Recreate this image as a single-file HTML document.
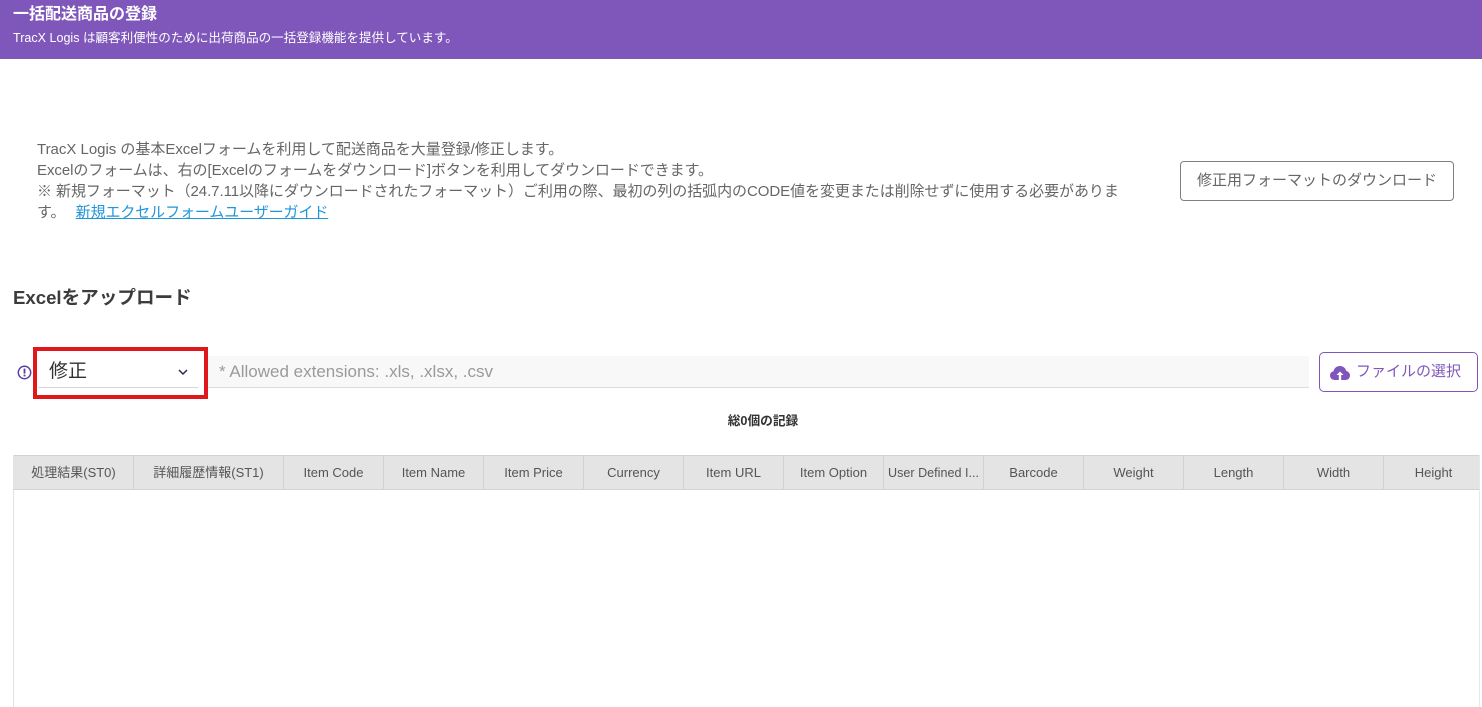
<!DOCTYPE html>
<html lang="ja">
<head>
<meta charset="utf-8">
<style>
html,body{margin:0;padding:0;background:#fff;}
body{width:1482px;height:707px;overflow:hidden;position:relative;font-family:"Liberation Sans","Noto Sans CJK JP",sans-serif;color:#666;}
.a{position:absolute;white-space:nowrap;}
.hd{left:0;top:0;width:1482px;height:59px;background:#7f57bb;}
.c{position:absolute;top:456px;height:33px;line-height:33px;text-align:center;font-size:13px;color:#555;border-right:1px solid #d2d2d2;box-sizing:border-box;overflow:hidden;}
</style>
</head>
<body>
<div class="a hd"></div>
<div class="a" style="left:13px;top:5px;font-size:16px;line-height:20px;font-weight:bold;color:#fff;">一括配送商品の登録</div>
<div class="a" style="left:13px;top:29px;font-size:12.55px;line-height:18px;color:#fff;">TracX Logis は顧客利便性のために出荷商品の一括登録機能を提供しています。</div>

<div class="a" style="left:37px;top:139px;font-size:15px;line-height:21px;color:#666;"><span style="letter-spacing:-.02px;">TracX Logis の基本Excelフォームを利用して配送商品を大量登録/修正します。</span><br><span style="letter-spacing:-.055px;">Excelのフォームは、右の[Excelのフォームをダウンロード]ボタンを利用してダウンロードできます。</span><br><span style="letter-spacing:-.06px;">※ 新規フォーマット（24.7.11以降にダウンロードされたフォーマット）ご利用の際、最初の列の括弧内のCODE値を変更または削除せずに使用する必要がありま</span><br>す。 <span style="color:#2196d9;text-decoration:underline;margin-left:6px;letter-spacing:-.1px;">新規エクセルフォームユーザーガイド</span></div>

<div class="a" style="left:1180px;top:161px;width:274px;height:40px;box-sizing:border-box;border:1px solid #808080;border-radius:4px;text-align:center;line-height:38px;font-size:15px;color:#666;">修正用フォーマットのダウンロード</div>

<div class="a" style="left:13px;top:286px;font-size:18.6px;line-height:24px;font-weight:bold;color:#3c3c3c;">Excelをアップロード</div>

<svg class="a" style="left:17px;top:365px;" width="15" height="15" viewBox="0 0 15 15"><circle cx="7.5" cy="7.5" r="6.2" fill="none" stroke="#5b3fa0" stroke-width="1.5"/><rect x="6.6" y="3.6" width="1.8" height="5" fill="#5b3fa0"/><rect x="6.6" y="9.6" width="1.8" height="1.8" fill="#5b3fa0"/></svg>

<div class="a" style="left:33px;top:347px;width:175px;height:52px;box-sizing:border-box;border:4px solid #e0181c;"></div>
<div class="a" style="left:38px;top:387px;width:160px;height:1px;background:#d6d6d6;"></div>
<div class="a" style="left:49px;top:359px;font-size:19px;line-height:26px;color:#333;">修正</div>
<svg class="a" style="left:177px;top:367px;" width="12" height="10" viewBox="0 0 12 10"><path d="M2 3 L6 7 L10 3" fill="none" stroke="#2a2a55" stroke-width="1.5"/></svg>

<div class="a" style="left:208px;top:356px;width:1101px;height:32px;background:#f8f8f8;border-bottom:1px solid #dcdcdc;box-sizing:border-box;"></div>
<div class="a" style="left:219px;top:361px;font-size:17px;line-height:22px;color:#9a9a9a;">* Allowed extensions: .xls, .xlsx, .csv</div>

<div class="a" style="left:1319px;top:352px;width:159px;height:40px;box-sizing:border-box;border:1px solid #7f57bb;border-radius:5px;"></div>
<svg class="a" style="left:1330px;top:365px;" width="20" height="16" viewBox="0 0 20 16"><path d="M5 15 C2 15 0 13 0 10.5 C0 8.300 1.500 6.700 3.500 6.300 C4.200 3 6.800 1 10 1 C13.200 1 15.600 3.200 16.200 6 C18.300 6.300 20 8.200 20 10.500 C20 13 18 15 15.500 15 Z" fill="#7f57bb"/><path d="M10 6.500 L13.500 10 L11.200 10 L11.200 15 L8.800 15 L8.800 10 L6.500 10 Z" fill="#fff"/></svg>
<div class="a" style="left:1356px;top:362px;font-size:15px;line-height:20px;color:#7f57bb;">ファイルの選択</div>

<div class="a" style="left:0;top:412px;width:1526px;text-align:center;font-size:12.7px;line-height:18px;font-weight:bold;color:#333;">総0個の記録</div>

<div class="a" style="left:13px;top:455px;width:1466px;height:35px;background:#e4e4e4;border-top:1px solid #d2d2d2;border-bottom:1px solid #d2d2d2;box-sizing:border-box;"></div>
<div class="c" style="left:14px;width:120px;">処理結果(ST0)</div>
<div class="c" style="left:134px;width:150px;">詳細履歴情報(ST1)</div>
<div class="c" style="left:284px;width:100px;">Item Code</div>
<div class="c" style="left:384px;width:100px;">Item Name</div>
<div class="c" style="left:484px;width:100px;">Item Price</div>
<div class="c" style="left:584px;width:100px;">Currency</div>
<div class="c" style="left:684px;width:100px;">Item URL</div>
<div class="c" style="left:784px;width:100px;">Item Option</div>
<div class="c" style="left:884px;width:100px;font-size:12.6px;line-height:34px;">User Defined I...</div>
<div class="c" style="left:984px;width:100px;">Barcode</div>
<div class="c" style="left:1084px;width:100px;">Weight</div>
<div class="c" style="left:1184px;width:100px;">Length</div>
<div class="c" style="left:1284px;width:100px;">Width</div>
<div class="c" style="left:1384px;width:99px;border-right:none;">Height</div>
<div class="a" style="left:13px;top:455px;width:1px;height:252px;background:#e2e2e2;"></div>
<div class="a" style="left:1479px;top:455px;width:1px;height:252px;background:#e8e8e8;"></div>
</body>
</html>
